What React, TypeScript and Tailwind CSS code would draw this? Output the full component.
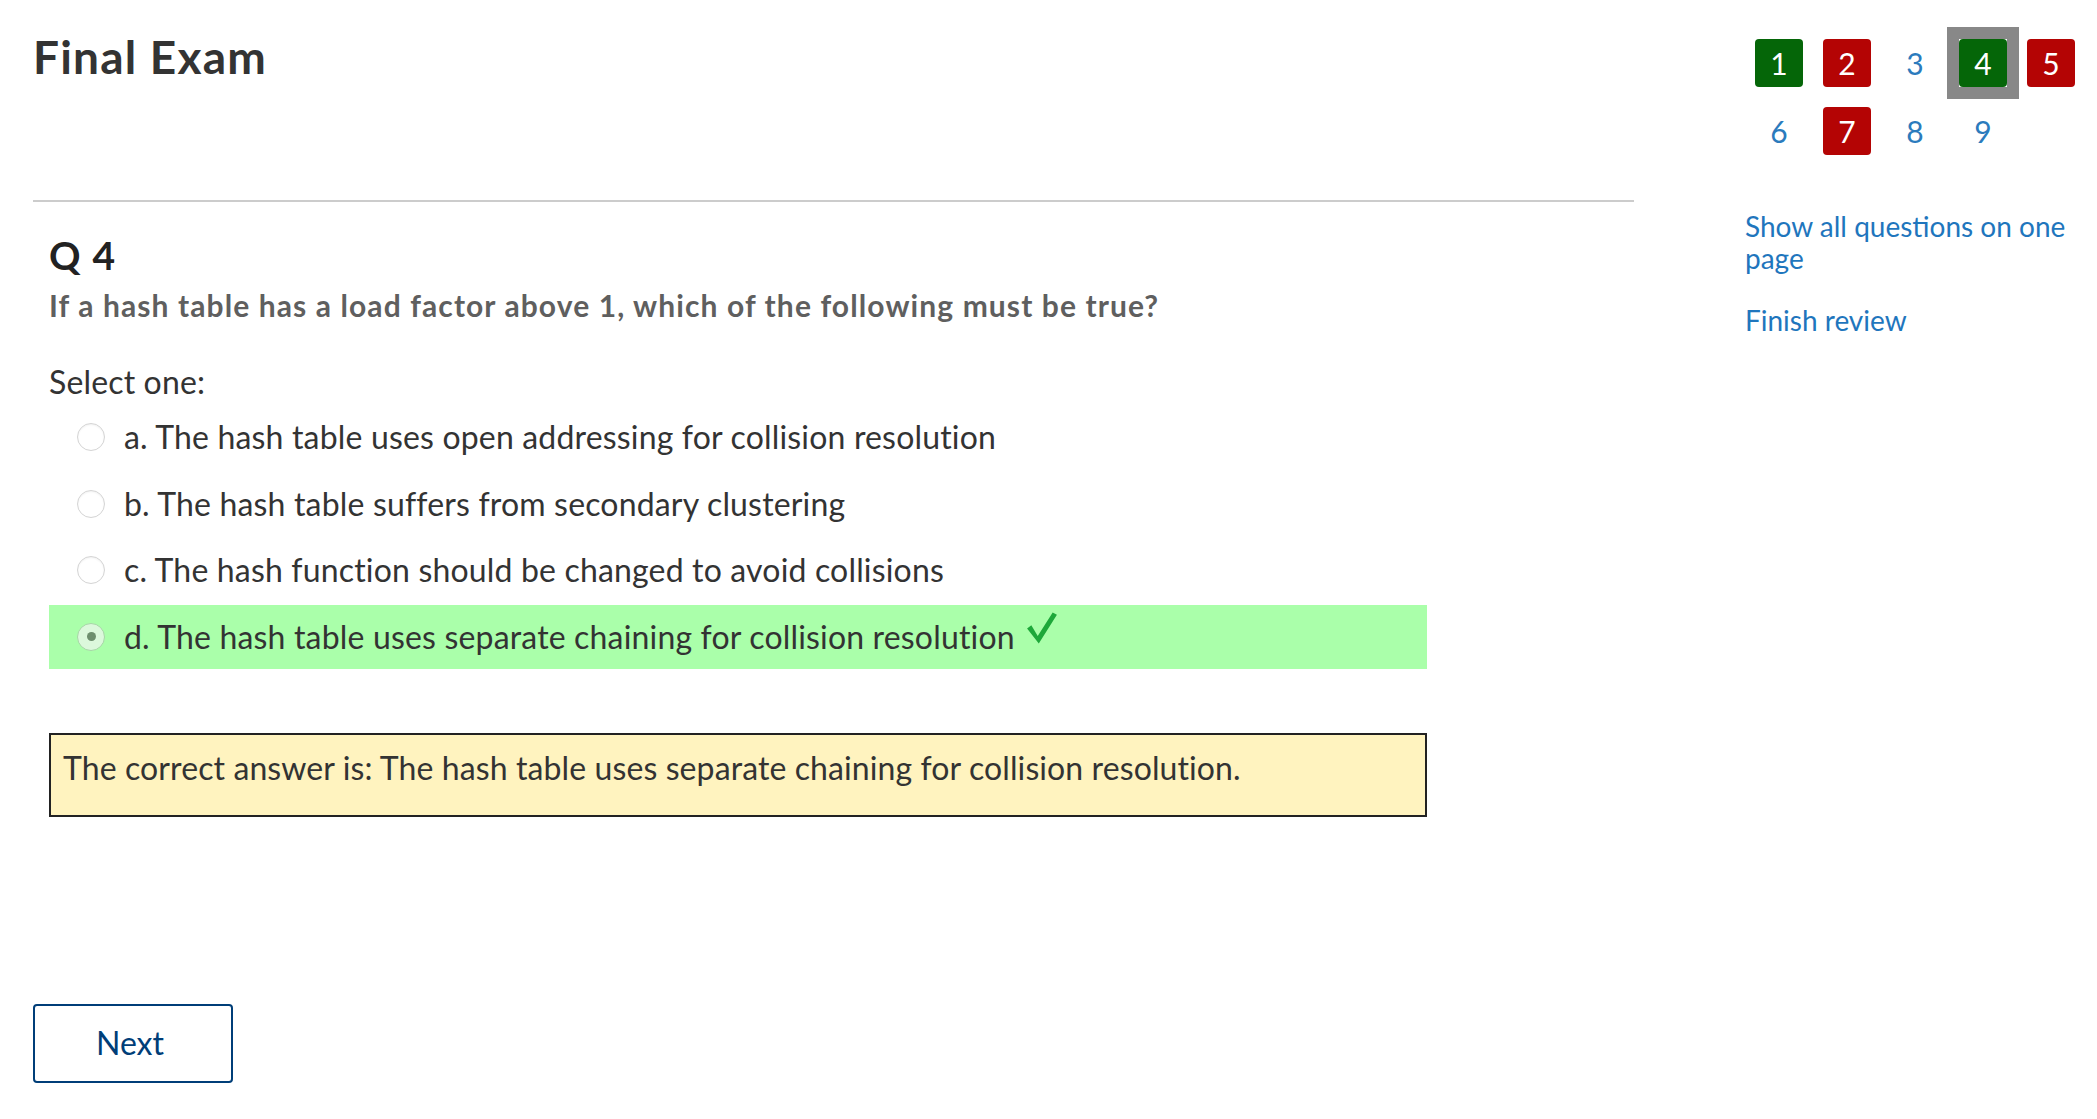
import React from 'react';

type NavState = 'correct' | 'wrong' | 'none';

const navItems: { n: number; state: NavState; current?: boolean }[] = [
  { n: 1, state: 'correct' },
  { n: 2, state: 'wrong' },
  { n: 3, state: 'none' },
  { n: 4, state: 'correct', current: true },
  { n: 5, state: 'wrong' },
  { n: 6, state: 'none' },
  { n: 7, state: 'wrong' },
  { n: 8, state: 'none' },
  { n: 9, state: 'none' },
];

const options = [
  { key: 'a', text: 'The hash table uses open addressing for collision resolution' },
  { key: 'b', text: 'The hash table suffers from secondary clustering' },
  { key: 'c', text: 'The hash function should be changed to avoid collisions' },
  { key: 'd', text: 'The hash table uses separate chaining for collision resolution', chosen: true },
];

function NavButton({ n, state, current }: { n: number; state: NavState; current?: boolean }) {
  const box =
    state === 'correct'
      ? 'bg-[#056608] text-white rounded-[4px]'
      : state === 'wrong'
        ? 'bg-[#b40404] text-white rounded-[4px]'
        : 'text-[#2b7bbd]';
  return (
    <div className={current ? 'w-[72px] h-[72px] -m-[12px] border-[12px] border-[#888888] flex' : 'w-[48px] h-[48px] flex'}>
      <div className={`w-[48px] h-[48px] flex items-center justify-center text-[30px] leading-none ${box}`}>
        {n}
      </div>
    </div>
  );
}

function Radio({ checked }: { checked?: boolean }) {
  return checked ? (
    <span className="w-[28px] h-[28px] rounded-full border border-[#a6d6a6] bg-[#dcf8dc] flex items-center justify-center shrink-0">
      <span className="w-[9px] h-[9px] rounded-full bg-[#6e8f6e]" />
    </span>
  ) : (
    <span className="w-[28px] h-[28px] rounded-full border border-[#d4d4d4] bg-white shadow-[inset_0_1px_2px_rgba(0,0,0,0.06)] shrink-0" />
  );
}

export default function App() {
  return (
    <div className="min-h-screen bg-white text-[#333333] font-['Lato','Liberation_Sans',sans-serif] flex px-[33px]">
      <main className="w-[1601px] shrink-0 flex flex-col">
        <h1 className="text-[46px] tracking-[1.2px] font-bold leading-none pt-[34px] h-[200px] text-[#333333]">
          Final Exam
        </h1>
        <div className="h-[2px] bg-[#cccccc]" />

        <section className="px-[16px]">
          <h2 className="text-[39px] tracking-[1.2px] font-bold leading-none mt-[34px] text-[#222222]">Q 4</h2>
          <p className="text-[30px] tracking-[1.1px] font-bold text-[#5f5f5f] mt-[15px] leading-none">
            If a hash table has a load factor above 1, which of the following must be true?
          </p>

          <p className="text-[32px] tracking-[0.15px] leading-none mt-[46px]">Select one:</p>

          <div className="mt-[7px] w-[1378px] flex flex-col gap-[2.5px]">
            {options.map((o) => (
              <div
                key={o.key}
                className={`h-[64px] flex items-center pl-[28px] gap-[19px] text-[32px] tracking-[0.17px] leading-none ${o.chosen ? 'bg-[#aaffaa]' : ''}`}
              >
                <Radio checked={o.chosen} />
                <span>
                  {o.key}. {o.text}
                </span>
                {o.chosen && (
                  <svg viewBox="0 0 30 32" className="w-[32px] h-[35px] -mt-[18px] -ml-[8px]">
                    <path d="M1 17 L5 14 L11 24 L25 2 L29 4 L12 31 Z" fill="#1ea83a" />
                  </svg>
                )}
              </div>
            ))}
          </div>

          <div className="mt-[64px] w-[1378px] h-[84px] border-2 border-[#222222] bg-[#fff3bf] px-[12px] pt-[17px] text-[32px] tracking-[0.1px] leading-none">
            The correct answer is: The hash table uses separate chaining for collision resolution.
          </div>
        </section>

        <div className="mt-[187px]">
          <button className="w-[200px] h-[79px] border-2 border-[#003e78] rounded-[4px] text-[#003e78] text-[32px] bg-white pr-[6px]">
            Next
          </button>
        </div>
      </main>

      <aside className="ml-[111px] flex flex-col pt-[39px]">
        <div className="grid grid-cols-[repeat(5,48px)] gap-x-[20px] gap-y-[20px] ml-[10px]">
          {navItems.map((it) => (
            <NavButton key={it.n} n={it.n} state={it.state} current={it.current} />
          ))}
        </div>
        <a className="mt-[55px] text-[28px] leading-[32px] text-[#1f76bd] w-[340px]">
          Show all questions on one page
        </a>
        <a className="mt-[30px] text-[28px] leading-[32px] text-[#1f76bd]">Finish review</a>
      </aside>
    </div>
  );
}
